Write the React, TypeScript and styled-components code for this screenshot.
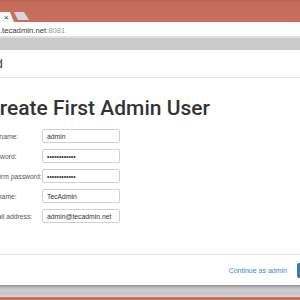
import React from 'react';
import styled, { createGlobalStyle } from 'styled-components';

type Field = {
  label: string;
  value: string;
  password?: boolean;
};

const fields: Field[] = [
  { label: 'Username:', value: 'admin' },
  { label: 'Password:', value: 'secretpass12', password: true },
  { label: 'Confirm password:', value: 'secretpass12', password: true },
  { label: 'Full name:', value: 'TecAdmin' },
  { label: 'E-mail address:', value: 'admin@tecadmin.net' },
];

const App: React.FC = () => {
  return (
    <>
      <GlobalStyle />
      <Screen>
        <TitleBar>
          <ActiveTab>
            <TabClose>×</TabClose>
          </ActiveTab>
          <NewTab />
        </TitleBar>
        <AddressBar>
          <UrlHost>
            jenkins<Domain>.tecadmin.net</Domain>
          </UrlHost>
          <UrlPort>:8081</UrlPort>
        </AddressBar>
        <Backdrop />
        <Modal>
          <ModalHeader>
            <HeaderTitle>Getting Started</HeaderTitle>
          </ModalHeader>
          <ModalBody>
            <Title>Create First Admin User</Title>
            <Form>
              {fields.map(field => (
                <Row key={field.label}>
                  <Label>{field.label}</Label>
                  <Input type={field.password ? 'password' : 'text'} value={field.value} readOnly />
                </Row>
              ))}
            </Form>
          </ModalBody>
          <ModalFooter>
            <LinkButton>Continue as admin</LinkButton>
            <PrimaryButton>Save and Finish</PrimaryButton>
          </ModalFooter>
        </Modal>
        <Taskbar />
        <BottomEdge />
      </Screen>
    </>
  );
};

export default App;

const GlobalStyle = createGlobalStyle`
  html, body {
    margin: 0;
    padding: 0;
    background: #fff;
    overflow: hidden;
  }
  * {
    box-sizing: border-box;
  }
`;

const Screen = styled.div`
  width: 300px;
  height: 300px;
  overflow: hidden;
  display: flex;
  flex-direction: column;
  font-family: 'Liberation Sans', Arial, sans-serif;
`;

const TitleBar = styled.div`
  height: 22px;
  flex-shrink: 0;
  background: linear-gradient(#b9604f 0, #c46b5b 2px, #c86f60 100%);
  display: flex;
  align-items: flex-end;
`;

const ActiveTab = styled.div`
  width: 14px;
  height: 10px;
  background: #f7f7f7;
  clip-path: polygon(0 0, 10px 0, 14px 100%, 0 100%);
  position: relative;
`;

const TabClose = styled.span`
  position: absolute;
  left: 4px;
  top: 1px;
  font-size: 8px;
  line-height: 9px;
  color: #333;
`;

const NewTab = styled.div`
  width: 15px;
  height: 8px;
  margin-bottom: 2px;
  background: #d8d8d8;
  clip-path: polygon(0 0, 10px 0, 15px 100%, 4px 100%);
`;

const AddressBar = styled.div`
  height: 15px;
  flex-shrink: 0;
  background: #fff;
  display: flex;
  align-items: center;
  padding-top: 2px;
  font-family: 'Liberation Sans', Arial, sans-serif;
  font-size: 7.7px;
  border-bottom: 1px solid #e2e2e2;
`;

const UrlHost = styled.span`
  color: #2f2f2f;
  margin-left: -24px;
`;

const Domain = styled.span`
  color: #3a3a3a;
`;

const UrlPort = styled.span`
  color: #9a9a9a;
`;

const Backdrop = styled.div`
  height: 13px;
  flex-shrink: 0;
  background: #cbcbcb;
  border-top: 1px solid #dedede;
`;

const Modal = styled.div`
  flex: 1;
  background: #fff;
  display: flex;
  flex-direction: column;
  margin-left: -30px;
`;

const ModalHeader = styled.div`
  height: 28px;
  flex-shrink: 0;
  border-bottom: 1px solid #e5e5e5;
  display: flex;
  align-items: center;
`;

const HeaderTitle = styled.span`
  font-family: 'Liberation Sans', Arial, sans-serif;
  font-size: 12px;
  color: #333;
  margin-left: -48px;
`;

const ModalBody = styled.div`
  height: 177px;
  flex-shrink: 0;
  border-bottom: 1px solid #e5e5e5;
  padding-left: 16px;
`;

const Title = styled.h1`
  margin: 20px 0 7px;
  font-family: Roboto, 'Liberation Sans', sans-serif;
  font-weight: 500;
  font-size: 21px;
  line-height: 21px;
  color: #333;
  white-space: nowrap;
`;

const Form = styled.div`
  display: flex;
  flex-direction: column;
  margin-left: -1px;
`;

const Row = styled.div`
  height: 20px;
  display: flex;
  align-items: center;
`;

const Label = styled.label`
  width: 57px;
  flex-shrink: 0;
  font-size: 6.8px;
  color: #555;
  white-space: nowrap;
`;

const Input = styled.input`
  width: 78px;
  height: 14px;
  border: 1px solid #d0d0d0;
  border-radius: 2px;
  padding: 0 4px;
  font-family: 'Liberation Sans', Arial, sans-serif;
  font-size: 6.8px;
  color: #333;
  background: #fff;
  outline: none;
`;

const ModalFooter = styled.div`
  height: 30px;
  flex-shrink: 0;
  display: flex;
  align-items: center;
  justify-content: flex-end;
  gap: 10px;
  margin-right: -63px;
`;

const LinkButton = styled.span`
  font-size: 7px;
  color: #3d85c6;
`;

const PrimaryButton = styled.button`
  height: 15px;
  width: 66px;
  border: none;
  border-radius: 2px;
  background: #337ab7;
  color: #fff;
  font-size: 7px;
  padding: 0 6px;
  font-family: 'Liberation Sans', Arial, sans-serif;
`;

const Taskbar = styled.div`
  height: 12px;
  flex-shrink: 0;
  background: linear-gradient(#8e8e8e 0, #b3b3b3 2px, #cfcfcf 40%, #c4c4c4 70%, #d6d6d6 100%);
`;

const BottomEdge = styled.div`
  height: 3px;
  flex-shrink: 0;
  background: #c86f60;
`;
